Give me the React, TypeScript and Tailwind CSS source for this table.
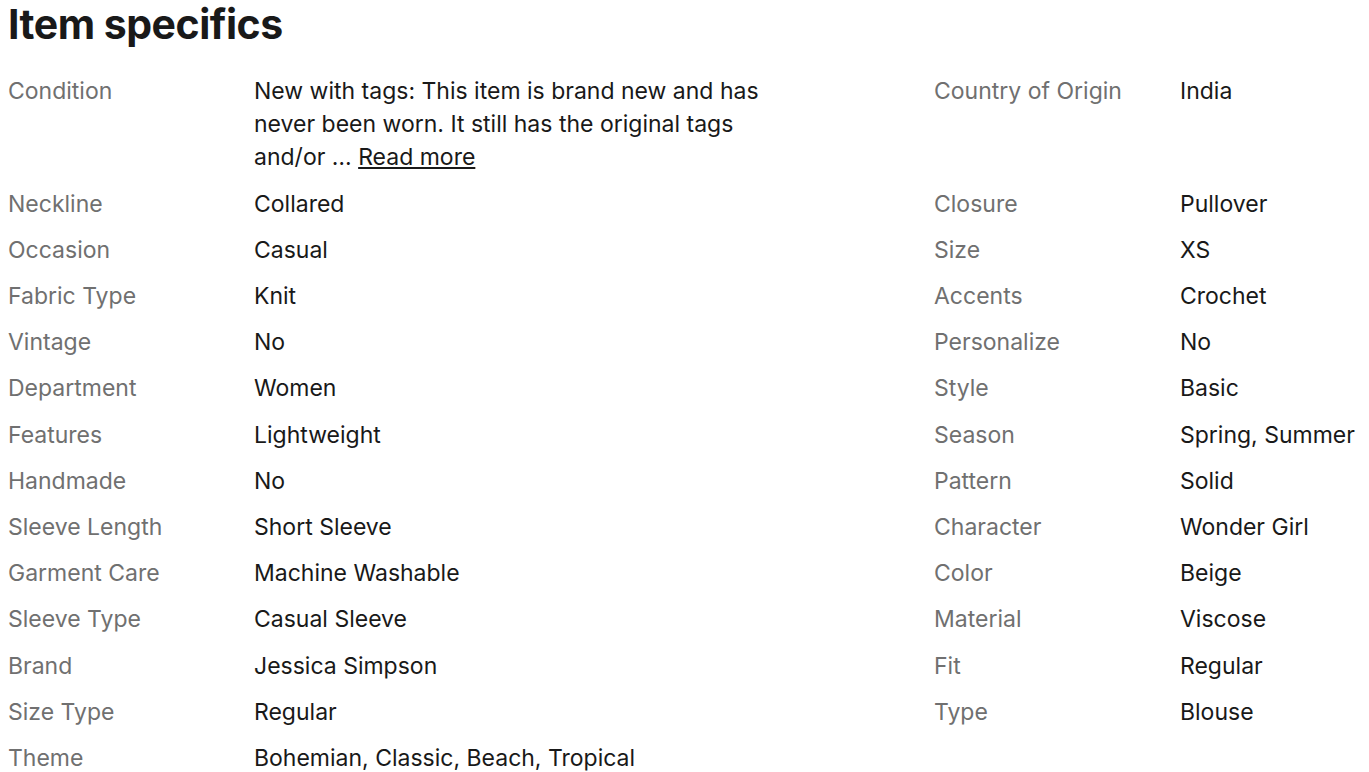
import React from 'react';

type Spec = { label: string; value: React.ReactNode };

const left: Spec[] = [
  {
    label: 'Condition',
    value: (
      <>
        New with tags: This item is brand new and has never been worn. It still has the original tags and/or …{' '}
        <a href="#" className="underline underline-offset-[2px]">
          Read more
        </a>
      </>
    ),
  },
  { label: 'Neckline', value: 'Collared' },
  { label: 'Occasion', value: 'Casual' },
  { label: 'Fabric Type', value: 'Knit' },
  { label: 'Vintage', value: 'No' },
  { label: 'Department', value: 'Women' },
  { label: 'Features', value: 'Lightweight' },
  { label: 'Handmade', value: 'No' },
  { label: 'Sleeve Length', value: 'Short Sleeve' },
  { label: 'Garment Care', value: 'Machine Washable' },
  { label: 'Sleeve Type', value: 'Casual Sleeve' },
  { label: 'Brand', value: 'Jessica Simpson' },
  { label: 'Size Type', value: 'Regular' },
  { label: 'Theme', value: 'Bohemian, Classic, Beach, Tropical' },
];

const right: Spec[] = [
  { label: 'Country of Origin', value: 'India' },
  { label: 'Closure', value: 'Pullover' },
  { label: 'Size', value: 'XS' },
  { label: 'Accents', value: 'Crochet' },
  { label: 'Personalize', value: 'No' },
  { label: 'Style', value: 'Basic' },
  { label: 'Season', value: 'Spring, Summer' },
  { label: 'Pattern', value: 'Solid' },
  { label: 'Character', value: 'Wonder Girl' },
  { label: 'Color', value: 'Beige' },
  { label: 'Material', value: 'Viscose' },
  { label: 'Fit', value: 'Regular' },
  { label: 'Type', value: 'Blouse' },
];

const SpecItem: React.FC<{ spec?: Spec; first?: boolean }> = ({ spec, first }) => {
  if (!spec) return <div />;
  return (
    <div className={first ? 'grid grid-cols-[246px_1fr] pb-[0.5px]' : 'grid grid-cols-[246px_1fr]'}>
      <dt className="text-[#707070]">{spec.label}</dt>
      <dd className="max-w-[520px] text-[#191919]">{spec.value}</dd>
    </div>
  );
};

export default function App() {
  const rows = left.map((l, i) => [l, right[i]] as const);
  return (
    <div className="h-[772px] w-full overflow-hidden bg-white pl-2 font-['Inter',sans-serif] text-[#191919]">
      <h2 className="text-[41px] font-bold leading-[48px] tracking-[-0.5px]">Item specifics</h2>
      <dl className="mt-[27px] grid grid-cols-[926px_1fr] gap-y-[13.2px] text-[23px] leading-[33px]">
        {rows.map(([l, r], i) => (
          <React.Fragment key={i}>
            <SpecItem spec={l} first={i === 0} />
            <SpecItem spec={r} first={i === 0} />
          </React.Fragment>
        ))}
      </dl>
    </div>
  );
}
